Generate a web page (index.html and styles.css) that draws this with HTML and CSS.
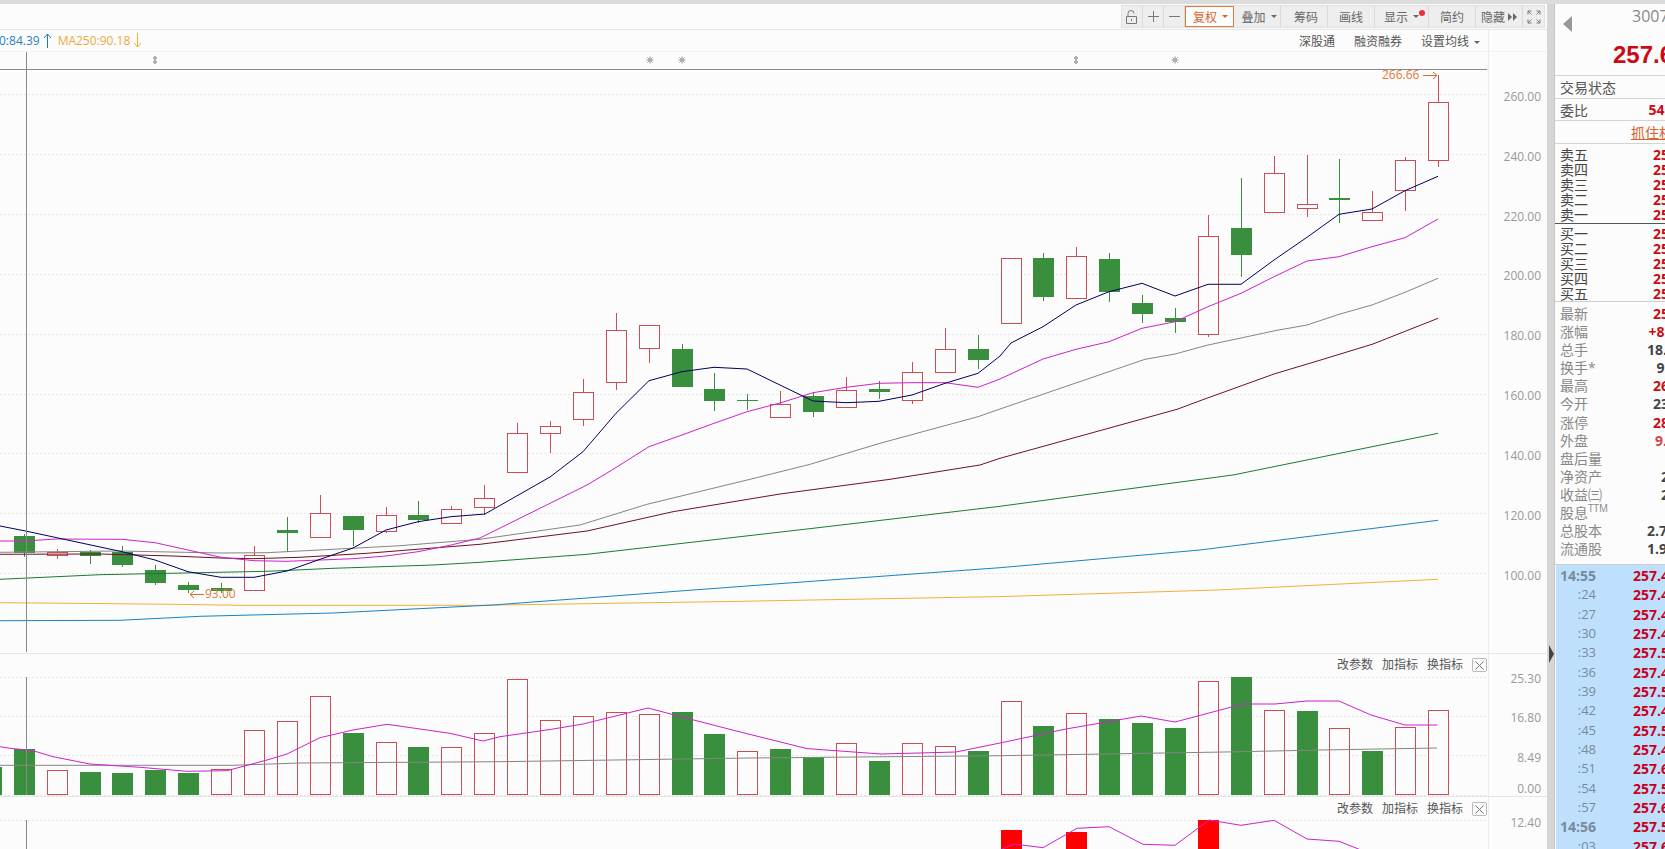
FILE: index.html
```html
<!DOCTYPE html>
<html lang="zh-CN">
<head>
<meta charset="utf-8">
<title>K线图</title>
<link rel="stylesheet" href="styles.css">
</head>
<body>
<div class="top-strip"></div>
<div class="workspace">
  <main class="chart-col">
    <div class="toolbar-row">
      <div class="toolbar">
        <button class="tb tb-icon"><svg width="15" height="16" viewBox="0 0 15 16"><path class="ico" d="M3 7V4.500a3 3 0 0 1 6 0M1.500 7.500h10v7h-10zM6.500 10v2"/></svg></button>
        <button class="tb tb-icon"><svg width="13" height="13" viewBox="0 0 13 13"><path class="ico" d="M6.500 1v11M1 6.500h11"/></svg></button>
        <button class="tb tb-icon"><svg width="13" height="13" viewBox="0 0 13 13"><path class="ico" d="M1 6.500h11"/></svg></button>
        <button class="tb tb-text tb-active">复权<span class="caret caret-on"></span></button>
        <button class="tb tb-text tb-shift">叠加<span class="caret"></span></button>
        <button class="tb tb-text tb-shift">筹码</button>
        <button class="tb tb-text">画线</button>
        <button class="tb tb-show">显示<span class="caret"></span><span class="red-dot"></span></button>
        <button class="tb tb-text">简约</button>
        <button class="tb tb-text">隐藏<svg class="tb-dbl" width="9" height="8" viewBox="0 0 9 8"><path d="M0 0l4 4-4 4zM5 0l4 4-4 4z"/></svg></button>
        <button class="tb tb-icon"><svg width="14" height="14" viewBox="0 0 14 14"><path class="ico" d="M1 4.500V1h3.500M9.500 1H13v3.500M13 9.500V13H9.500M4.500 13H1V9.500M1 1l3.500 3.500M13 1L9.500 4.500M13 13L9.500 9.500M1 13l3.500-3.500"/></svg></button>
      </div>
    </div>
    <div class="chart-area">
      <div class="legend-row">
        <div class="legend-left">
          <span class="ma-blue">0:84.39</span>
          <svg class="legend-arrow" width="9" height="15" viewBox="0 0 9 15"><path class="arrow-blue" d="M4.500 15V1M1 5l3.500-4L8 5"/></svg>
          <span class="ma-orange">MA250:90.18</span>
          <svg class="legend-arrow" width="9" height="15" viewBox="0 0 9 15"><path class="arrow-orange" d="M4.500 0v14M1 10l3.500 4L8 10"/></svg>
        </div>
        <div class="legend-right">
          <span>深股通</span>
          <span>融资融券</span>
          <span>设置均线<span class="caret"></span></span>
        </div>
      </div>
      <section class="pane pane-main"><svg id="pane-main"></svg></section>
      <section class="pane pane-vol">
        <svg id="pane-vol"></svg>
        <div class="pane-tools"><span>改参数</span><span>加指标</span><span>换指标</span><span class="close-box"><svg width="9" height="9" viewBox="0 0 9 9"><path class="ico" d="M.5.5l8 8M8.500.5l-8 8"/></svg></span></div>
      </section>
      <section class="pane pane-ind">
        <svg id="pane-ind"></svg>
        <div class="pane-tools"><span>改参数</span><span>加指标</span><span>换指标</span><span class="close-box"><svg width="9" height="9" viewBox="0 0 9 9"><path class="ico" d="M.5.5l8 8M8.500.5l-8 8"/></svg></span></div>
      </section>
    </div>
  </main>
  <div class="splitter"><svg class="splitter-arrow" width="5" height="18" viewBox="0 0 5 18"><path d="M0 0l5 9-5 9z"/></svg></div>
  <aside class="side">
    <div class="side-inner">
      <header class="head">
        <div class="head-nav">
          <svg class="nav-tri" width="9" height="16" viewBox="0 0 9 16"><path d="M9 0v16L0 8z"/></svg>
          <span class="code">300750</span>
        </div>
        <div class="big-price">257.61</div>
      </header>
      <div class="line-row row-status"><span>交易状态</span></div>
      <div class="line-row row-ratio"><span>委比</span><b class="up">54.32%</b></div>
      <div class="line-row row-link"><a class="grab">抓住机会</a></div>
      <section class="book book-sell">
        <div class="book-row"><span>卖五</span><b class="up">257.90</b></div>
        <div class="book-row"><span>卖四</span><b class="up">257.85</b></div>
        <div class="book-row"><span>卖三</span><b class="up">257.80</b></div>
        <div class="book-row"><span>卖二</span><b class="up">257.70</b></div>
        <div class="book-row"><span>卖一</span><b class="up">257.65</b></div>
      </section>
      <section class="book book-buy">
        <div class="book-row"><span>买一</span><b class="up">257.61</b></div>
        <div class="book-row"><span>买二</span><b class="up">257.60</b></div>
        <div class="book-row"><span>买三</span><b class="up">257.55</b></div>
        <div class="book-row"><span>买四</span><b class="up">257.50</b></div>
        <div class="book-row"><span>买五</span><b class="up">257.45</b></div>
      </section>
      <section class="stats">
        <div class="stat"><span>最新</span><b class="up">257.61</b></div>
        <div class="stat"><span>涨幅</span><b class="up">+8.32%</b></div>
        <div class="stat"><span>总手</span><b>18.32万</b></div>
        <div class="stat"><span>换手*</span><b>9.82%</b></div>
        <div class="stat"><span>最高</span><b class="up">266.66</b></div>
        <div class="stat"><span>今开</span><b>238.00</b></div>
        <div class="stat"><span>涨停</span><b class="up">285.38</b></div>
        <div class="stat"><span>外盘</span><b class="up-soft">9.61万</b></div>
        <div class="stat"><span>盘后量</span></div>
        <div class="stat"><span>净资产</span><b>27.52</b></div>
        <div class="stat"><span>收益㈢</span><b>23.51</b></div>
        <div class="stat"><span>股息<sup class="ttm">TTM</sup></span></div>
        <div class="stat"><span>总股本</span><b>2.733亿</b></div>
        <div class="stat"><span>流通股</span><b>1.934亿</b></div>
      </section>
      <section class="ticks" id="ticks">
        <div class="tick"><span class="min">14:55</span><b>257.41</b></div>
        <div class="tick"><span class="sec">:24</span><b>257.45</b></div>
        <div class="tick"><span class="sec">:27</span><b>257.41</b></div>
        <div class="tick"><span class="sec">:30</span><b>257.45</b></div>
        <div class="tick"><span class="sec">:33</span><b>257.50</b></div>
        <div class="tick"><span class="sec">:36</span><b>257.45</b></div>
        <div class="tick"><span class="sec">:39</span><b>257.50</b></div>
        <div class="tick"><span class="sec">:42</span><b>257.45</b></div>
        <div class="tick"><span class="sec">:45</span><b>257.50</b></div>
        <div class="tick"><span class="sec">:48</span><b>257.45</b></div>
        <div class="tick"><span class="sec">:51</span><b>257.60</b></div>
        <div class="tick"><span class="sec">:54</span><b>257.50</b></div>
        <div class="tick"><span class="sec">:57</span><b>257.60</b></div>
        <div class="tick"><span class="min">14:56</span><b>257.50</b></div>
        <div class="tick"><span class="sec">:03</span><b>257.60</b></div>
      </section>
    </div>
  </aside>
</div>
<script src="chart.js"></script>
</body>
</html>
```
FILE: styles.css
```css
* { box-sizing: border-box; }
html, body { margin: 0; height: 100%; overflow: hidden; background: #fcfcfc; }
body {
  font-family: "Open Sans", "Noto Sans CJK SC", sans-serif;
  font-size: 12px;
  color: #555;
  display: flex;
  flex-direction: column;
}
.top-strip { height: 4px; flex: none; background: #dcdcdc; }
.workspace { flex: 1; display: flex; min-height: 0; }

/* chart column */
.chart-col { width: 1547px; flex: none; display: flex; flex-direction: column; }
.toolbar-row {
  height: 26px; flex: none;
  display: flex; justify-content: flex-end;
  padding: 1px 2px 0 0;
  border-bottom: 1px solid #e6e6e6;
}
.toolbar { display: flex; height: 23px; background: #eee; border: 1px solid #e0e0e0; }
.tb {
  font: inherit; color: #666; background: none;
  border: 0; border-right: 1px solid #dadada; padding: 0;
  display: flex; align-items: center; justify-content: center;
  position: relative;
}
.tb:last-child { border-right: 0; }
.tb-icon { width: 21px; }
.tb-text { width: 47px; }
.tb-shift { padding-left: 4px; }
.tb-show { width: 54px; }
.tb-active {
  width: 49px; padding-left: 2px;
  color: #d9622a; background: #fcfcfc;
  outline: 1px solid #e07a3a; outline-offset: -1px; border-right: 0;
}
.ico { fill: none; stroke: #777; stroke-width: 1; }
.caret {
  display: inline-block; width: 0; height: 0; margin-left: 5px; vertical-align: middle;
  border-left: 3px solid transparent; border-right: 3px solid transparent; border-top: 3px solid #666;
}
.caret-on { border-top-color: #d9622a; }
.red-dot {
  position: absolute; right: 3px; top: 4px;
  width: 6px; height: 6px; border-radius: 50%; background: #e8303a;
}
.tb-dbl { margin-left: 3px; fill: #666; }

.chart-area { flex: 1; position: relative; display: flex; flex-direction: column; min-height: 0; }
.chart-area::after {
  content: ""; position: absolute; left: 1488px; top: 0; bottom: 0; width: 1px; background: #ececec;
}
.legend-row {
  height: 22px; flex: none;
  display: flex; justify-content: space-between; align-items: center;
  border-bottom: 1px solid #f2f2f2;
  padding-right: 67px;
}
.legend-left { display: flex; align-items: center; margin-left: -1px; }
.legend-arrow { margin-left: 3px; margin-right: 6px; }
.ma-blue { color: #2a80c4; }
.ma-orange { color: #f0a93a; }
.arrow-blue { fill: none; stroke: #1f78b8; }
.arrow-orange { fill: none; stroke: #eeb020; }
.legend-right { display: flex; gap: 19px; color: #555; }

.pane { position: relative; flex: none; border-bottom: 1px solid #e6e6e6; }
.pane svg { display: block; }
.pane-main { height: 602px; }
.pane-vol { height: 143px; }
.pane-ind { height: 52px; border-bottom: 0; }
.pane-tools {
  position: absolute; right: 60px; top: 4px;
  display: flex; align-items: center; gap: 9px; color: #555; line-height: 14px; z-index: 1;
}
.close-box {
  width: 15px; height: 14px; border: 1px solid #bbb; border-radius: 2px;
  display: flex; align-items: center; justify-content: center;
}
.pane-ind .pane-tools { top: 5px; }

/* svg chart parts */
.grid { stroke: #e6e6e6; stroke-dasharray: 2 2; fill: none; }
.rule { stroke: #8a8a8a; }
.cursor { stroke: #8a8a8a; }
.ax { fill: #999; font-size: 12px; text-anchor: end; }
.note { fill: #e07b3a; font-size: 12px; }
.note-arrow { stroke: #d5702c; fill: none; }
.wick-r { stroke: #cc4c55; }
.wick-g { stroke: #3a8f3e; }
.body-r { stroke: #cc4c55; fill: #fcfcfc; }
.body-g { fill: #3a8f3e; }
.body-red { fill: #ff0000; }
.mark { fill: #b0b0b0; stroke: #b0b0b0; }
.ma { fill: none; stroke-width: 1; }
.ma5 { stroke: #000060; }
.ma10 { stroke: #cc22cc; }
.ma20 { stroke: #858585; }
.ma30 { stroke: #701020; }
.ma60 { stroke: #1c7a30; }
.ma120 { stroke: #1880c8; }
.ma250 { stroke: #f2b032; }

/* splitter */
.splitter { width: 7px; flex: none; background: #d6d6d6; position: relative; }
.splitter-arrow { position: absolute; left: 2px; top: 641px; fill: #444; }

/* side panel */
.side { width: 111px; flex: none; overflow: hidden; border-left: 1px solid #c4c4c4; background: #fcfcfc; }
.side-inner { width: 142px; height: 100%; display: flex; flex-direction: column; font-size: 14px; }
.head { height: 72px; flex: none; border-bottom: 1px solid #d4d4d4; }
.head-nav { display: flex; height: 24px; }
.nav-tri { margin: 12px 0 0 8px; fill: #999; flex: none; }
.code { margin-left: 60px; font-size: 16px; line-height: 24px; color: #888; white-space: nowrap; }
.big-price {
  margin: 9px 0 0 58px; white-space: nowrap;
  font: bold 24px/36px "Liberation Sans", sans-serif; color: #cc0a14;
}
.line-row {
  flex: none; display: flex; justify-content: space-between; align-items: center;
  padding-left: 5px; border-bottom: 1px solid #d4d4d4; color: #555;
}
.row-status { height: 23px; }
.row-ratio { height: 22px; }
.row-link { height: 23px; padding-left: 76px; justify-content: flex-start; }
.grab { color: #d9622a; text-decoration: underline; white-space: nowrap; }
b { font-weight: 700; color: #444; white-space: nowrap; }
b.up { color: #cc0a14; }
b.up-soft { color: #d64550; }
.book { flex: none; }
.book-sell { padding: 3px 0 1px; border-bottom: 1px solid #555; }
.book-buy { padding-top: 2px; border-bottom: 1px solid #cfcfcf; }
.book-row {
  height: 15px; line-height: 15px; display: flex; justify-content: space-between;
  padding-left: 5px; color: #444;
}
.stats { flex: none; padding: 3px 0 5.300px; border-bottom: 1px solid #cfcfcf; }
.stat {
  height: 18.100px; line-height: 18.100px; display: flex; justify-content: space-between;
  padding-left: 5px; color: #888;
}
.ttm { font-size: 10px; line-height: 0; }
.ticks {
  flex: 1; min-height: 0; overflow: hidden;
  margin-left: 1px; padding-top: 1.500px; background: #bfe0fd;
}
.tick {
  height: 19.330px; line-height: 19.330px;
  display: grid; grid-template-columns: 40px auto; column-gap: 37px;
}
.min, .sec { text-align: right; color: #778a9c; }
.min { font-weight: 700; }
.sec { font-size: 13px; }
.tick b { color: #c8001e; }
```
FILE: chart.js
```js
(function () {
  var NS = 'http://www.w3.org/2000/svg';
  function el(parent, name, attrs, text) {
    var n = document.createElementNS(NS, name);
    for (var k in attrs) n.setAttribute(k, attrs[k]);
    if (text) n.textContent = text;
    parent.appendChild(n);
    return n;
  }
  function pane(id, top, h) {
    var s = document.getElementById(id);
    s.setAttribute('width', 1547);
    s.setAttribute('height', h);
    s.setAttribute('viewBox', '0 ' + top + ' 1547 ' + h);
    return s;
  }
  function dots(s, ys) {
    ys.forEach(function (y) {
      el(s, 'line', { class: 'grid', x1: 0, x2: 1488, y1: y + 0.5, y2: y + 0.5 });
    });
  }
  function labels(s, list) {
    list.forEach(function (l) {
      el(s, 'text', { class: 'ax', x: 1541, y: l[1] + 4 }, l[0]);
    });
  }
  function line(s, cls, pts) {
    el(s, 'polyline', { class: 'ma ' + cls, points: pts.map(function (p) { return p.join(','); }).join(' ') });
  }
  function px(v) { return Math.floor(v) + 0.5; }

  /* ---------- main pane ---------- */
  var main = pane('pane-main', 52, 601);
  var gridY = [];
  var labelY = [];
  for (var i = 0; i < 9; i++) {
    gridY.push(Math.round(94 + i * 59.9));
    labelY.push([(260 - i * 20).toFixed(2), 96.7 + i * 59.9]);
  }
  dots(main, gridY);
  labels(main, labelY);
  el(main, 'line', { class: 'rule', x1: 0, x2: 1487, y1: 69.5, y2: 69.5 });

  /* x, r/g, body top, body bottom, high, low */
  var candles = [
    [24.5,'g',536,552.7,534,557],[57.3,'r',552.3,555.3,549,559],[90.3,'g',552,555.7,550,563.7],
    [122.3,'g',552.3,565,546,566.7],[155.3,'g',570,582.7,565,585],[188.3,'g',585.3,590.7,582,593],
    [221.3,'g',588,590.7,583,593],[254.3,'r',555.3,590.3,546,590.3],[287.3,'g',530.3,533.7,517,552],
    [320.3,'r',513.3,537.3,495,537.3],[353.3,'g',516,529.7,516,546],[386.3,'r',515.3,531.7,506.7,533],
    [418.3,'g',515,520,500.7,523],[451.3,'r',509.3,523.3,506,523.3],[484.3,'r',498,507.3,485,515],
    [517.3,'r',433.3,472.3,423.3,472.3],[550.3,'r',426.3,433.7,420.7,453.3],[583.3,'r',392.3,419.3,379,425.7],
    [616.3,'r',330.3,382.3,313.3,389.7],[649.3,'r',325.3,348.3,325.3,363.3],[682.3,'g',349,386.7,344,386.7],
    [714.3,'g',389,400.7,373.3,410.7],[747.3,'d',400,400.7,394,410],[780.3,'r',404.3,417.3,391.3,417.3],
    [813.3,'g',396,411.7,391.7,416.7],[846.3,'r',390.3,407.3,377.3,407.3],[879.3,'g',389,391.7,381.3,399],
    [912.3,'r',372.3,400.3,362.3,403.7],[945.3,'r',349.3,372.3,328.3,372.3],[978.3,'g',349,359.7,335,368.7],
    [1011.3,'r',258.3,323.3,258.3,323.3],[1043.3,'g',258,296.7,253,300.7],[1076.3,'r',256.3,298.3,247,298.3],
    [1109.3,'g',259,291.7,253,302.3],[1142.3,'g',303,313.7,295,322.7],[1175.3,'g',318,321.7,308.3,332.7],
    [1208.3,'r',236.3,334.3,215,336.7],[1241.3,'g',228,254.7,178,276.7],[1274.3,'r',173.3,212.3,156,212.3],
    [1307.3,'r',204.3,208.3,155,216.7],[1339.3,'g',198,199.7,159,222.7],[1372.3,'r',212.3,220.3,191,220.3],
    [1405.3,'r',160.3,190.3,157.3,210.7],[1438.3,'r',102.3,160.3,75,167.3]
  ];
  var crisp = el(main, 'g', { 'shape-rendering': 'crispEdges' });
  candles.forEach(function (c) {
    var x = px(c[0]), red = c[1] === 'r';
    el(crisp, 'line', { class: red ? 'wick-r' : 'wick-g', x1: x, x2: x, y1: c[4], y2: c[5] });
    if (red) {
      el(crisp, 'rect', { class: 'body-r', x: x - 10, y: px(c[2]), width: 20, height: Math.round(c[3] - c[2]) });
    } else {
      el(crisp, 'rect', { class: 'body-g', x: x - 10.5, y: Math.round(c[2]), width: 21, height: Math.max(1, Math.round(c[3] - c[2])) });
    }
  });

  line(main, 'ma250', [[0,602.7],[73,603.3],[173,604.3],[240,605.3],[480,605.3],[730,601.5],[1000,596.6],[1217,590],[1438,579.3]]);
  line(main, 'ma120', [[0,620.7],[120,620.3],[200,616.3],[333,613],[467,606.3],[493,605],[747,586],[1000,567.7],[1200,550],[1438,520.3]]);
  line(main, 'ma60', [[0,579.3],[100,574.7],[200,572.7],[267,571.3],[333,568.3],[433,565],[480,562.3],[587,554.3],[813,528.3],[1000,506.3],[1133,488.3],[1233,475],[1438,433.3]]);
  line(main, 'ma30', [[0,554.3],[100,554],[173,556],[220,558],[253,558.7],[300,557.3],[367,553.3],[417,549.3],[480,544.3],[587,531],[673,511.7],[780,494],[890,479.3],[980,465],[1000,458.3],[1177,409.3],[1202,400],[1274,374],[1323,359.3],[1373,344],[1438,318.3]]);
  line(main, 'ma20', [[0,552.3],[120,551],[220,553],[267,552.7],[333,549.3],[400,545.7],[480,539.3],[580,525],[647,504.3],[750,479.3],[810,464.3],[880,443.3],[978,416.7],[1000,409],[1145,359.3],[1175,354],[1208,345],[1241,338],[1275,330.7],[1307,325],[1340,314],[1372,305],[1405,292.3],[1438,278.3]]);
  line(main, 'ma10', [[0,541],[24,541],[57,539],[122,539.3],[155,542.7],[188,550],[221,557.3],[254,560.7],[287,561.3],[320,560],[353,558.7],[386,556],[418,551.7],[451,545],[480,538],[587,485],[612,470],[649,446.7],[682,435],[714,423.3],[747,411.7],[780,403],[813,392.7],[846,387.3],[879,383.3],[912,382.7],[945,382.7],[978,387.3],[1000,379],[1043,359],[1076,349.3],[1109,341.7],[1142,328.3],[1175,321.7],[1208,306.7],[1241,293.3],[1274,276.7],[1307,261],[1339,256.7],[1372,246.7],[1405,237.7],[1438,219]]);
  line(main, 'ma5', [[0,526],[24,530.7],[122,551.7],[155,560],[188,571.7],[221,577.3],[254,577.3],[287,571],[320,559.3],[353,548],[386,530],[418,521.7],[451,516.7],[485,514],[550,477],[583,451.7],[616,413.3],[649,380.7],[682,371.7],[714,367.3],[747,369],[780,385],[813,401],[846,402.7],[879,401.3],[912,395],[945,383.3],[978,373.3],[1000,356],[1011,343],[1043,326.7],[1076,305],[1109,291.7],[1142,283.3],[1175,296],[1208,284.3],[1241,284.3],[1274,260],[1307,237.3],[1339,214.3],[1372,209],[1405,190.7],[1438,176.3]]);

  el(main, 'line', { class: 'cursor', x1: 26.5, x2: 26.5, y1: 52, y2: 652 });

  /* top-row event marks */
  [155, 1076].forEach(function (x) {
    el(main, 'path', { class: 'mark', d: 'M' + x + ' 56l2 2-2 2 2 2-2 2-2-2 2-2-2-2z' });
  });
  [650, 682, 1175].forEach(function (x) {
    el(main, 'circle', { class: 'mark', cx: x, cy: 60, r: 2 });
    el(main, 'path', { class: 'mark', d: 'M' + x + ' 56v8M' + (x - 4) + ' 60h8M' + (x - 3) + ' 57l6 6M' + (x + 3) + ' 57l-6 6', 'stroke-width': 0.8 });
  });

  /* high / low notes */
  el(main, 'text', { class: 'note', x: 1382, y: 79 }, '266.66');
  el(main, 'path', { class: 'note-arrow', d: 'M1423 75.500h14M1433 72l4 3.500-4 3.500' });
  el(main, 'text', { class: 'note', x: 205, y: 598 }, '93.00');
  el(main, 'path', { class: 'note-arrow', d: 'M204 594.500h-14M194 591l-4 3.500 4 3.500' });

  /* ---------- volume pane ---------- */
  var vol = pane('pane-vol', 654, 142);
  dots(vol, [677, 716, 755, 795]);
  labels(vol, [['25.30', 679], ['16.80', 718], ['8.49', 757.7], ['0.00', 789.3]]);
  var bars = [
    [-8.7,'g',766.7],[24.5,'g',749],[57.3,'r',770.3],[90.3,'g',772],[122.3,'g',773],[155.3,'g',770.3],[188.3,'g',773],
    [221.3,'r',769.3],[254.3,'r',730.3],[287.3,'r',721.3],[320.3,'r',696.3],[353.3,'g',733],[386.3,'r',742.3],
    [418.3,'g',747],[451.3,'r',747.3],[484.3,'r',733.3],[517.3,'r',679.6],[550.3,'r',720],[583.3,'r',716.8],
    [616.3,'r',712.5],[649.3,'r',714.6],[682.3,'g',711.5],[714.3,'g',733.8],[747.3,'r',751.8],[780.3,'g',748.6],
    [813.3,'g',757],[846.3,'r',743.3],[879.3,'g',761.4],[912.3,'r',743.3],[945.3,'r',746.5],[978.3,'g',750.8],
    [1011.3,'r',701.3],[1043.3,'g',726],[1076.3,'r',713.3],[1109.3,'g',719],[1142.3,'g',723],[1175.3,'g',728],
    [1208.3,'r',681.3],[1241.3,'g',677],[1274.3,'r',710.3],[1307.3,'g',711],[1339.3,'r',728.3],[1372.3,'g',751],
    [1405.3,'r',727.3],[1438.3,'r',710.3]
  ];
  var vc = el(vol, 'g', { 'shape-rendering': 'crispEdges' });
  bars.forEach(function (b) {
    var x = px(b[0]);
    if (b[1] === 'r') {
      el(vc, 'rect', { class: 'body-r', x: x - 10, y: px(b[2]), width: 20, height: 794.5 - px(b[2]) });
    } else {
      el(vc, 'rect', { class: 'body-g', x: x - 10.5, y: Math.round(b[2]), width: 21, height: 795 - Math.round(b[2]) });
    }
  });
  line(vol, 'ma20', [[0,765.3],[233,765.3],[300,763],[500,761.7],[750,758],[1000,755.7],[1225,752],[1321,750],[1437,748]]);
  line(vol, 'ma10', [[0,746.7],[10,748.3],[33,750.7],[53,756.7],[90,764],[140,767.3],[187,771.3],[227,770.7],[267,760],[287,754],[320,737.7],[353,730],[387,724.3],[420,729],[450,733.3],[483,741],[500,736.7],[550,729.5],[583,724],[648,708],[682,717],[743,732.7],[807,748.6],[881,754],[956,752],[1000,743],[1066,729],[1141,716],[1175,722],[1243,704],[1275,704],[1307,701],[1339,701],[1371,715],[1405,725],[1437.5,725]]);
  el(vol, 'line', { class: 'cursor', x1: 26.5, x2: 26.5, y1: 677, y2: 795 });

  /* ---------- lower indicator pane ---------- */
  var ind = pane('pane-ind', 797, 52);
  dots(ind, [820]);
  labels(ind, [['12.40', 822.7]]);
  [[1001, 830, 21], [1066, 832, 21], [1198, 820, 21]].forEach(function (r) {
    el(ind, 'rect', { class: 'body-red', x: r[0], y: r[1], width: r[2], height: 849 - r[1] });
  });
  line(ind, 'ma10', [[1000,850],[1014,844],[1043,847.7],[1077,828.3],[1109,826.7],[1143,844.3],[1175,845.3],[1209,820],[1241,825.3],[1274,820.3],[1307,839],[1339,841.3],[1361,850]]);
  el(ind, 'line', { class: 'cursor', x1: 26.5, x2: 26.5, y1: 820, y2: 849 });
})();
```
